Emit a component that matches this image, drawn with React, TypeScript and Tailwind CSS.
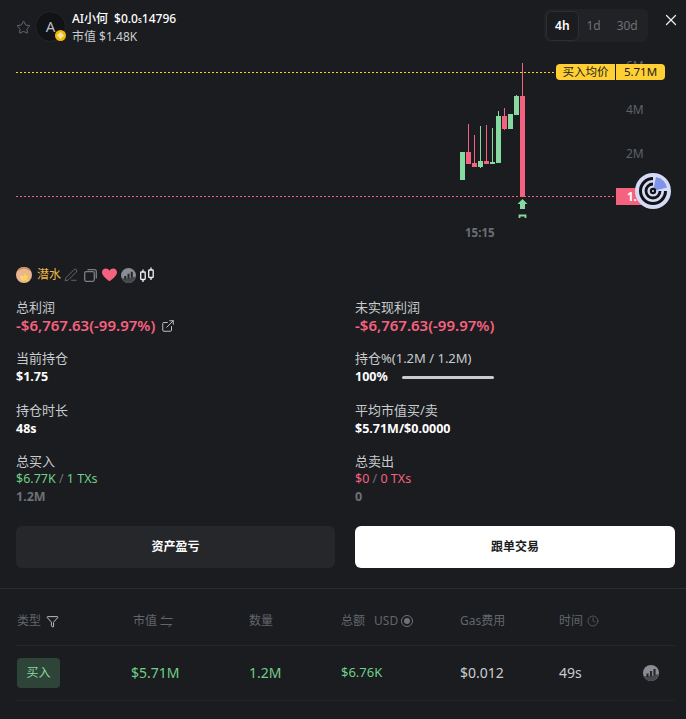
import React from 'react';
import { Clock, Filter, ExternalLink, PenLine, Star, X } from 'lucide-react';

interface Candle {
  x: number;
  top: number;
  bottom: number;
  wickTop: number;
  wickBottom: number;
  up: boolean;
}

const GREEN = '#86d9a0';
const RED = '#f4627f';

// y values are page coordinates, the svg is shifted by the chart's top
const candles: Candle[] = [
  { x: 460, top: 152, bottom: 180, wickTop: 152, wickBottom: 180, up: true },
  { x: 466, top: 152, bottom: 164, wickTop: 124, wickBottom: 164, up: false },
  { x: 472, top: 163, bottom: 167, wickTop: 135, wickBottom: 167, up: false },
  { x: 478, top: 161, bottom: 167, wickTop: 126, wickBottom: 168, up: true },
  { x: 484, top: 161, bottom: 164, wickTop: 125, wickBottom: 164, up: false },
  { x: 490, top: 162, bottom: 164, wickTop: 128, wickBottom: 164, up: true },
  { x: 496, top: 116, bottom: 163, wickTop: 111, wickBottom: 163, up: true },
  { x: 502, top: 116, bottom: 129, wickTop: 108, wickBottom: 130, up: false },
  { x: 508, top: 114, bottom: 129, wickTop: 114, wickBottom: 129, up: true },
  { x: 514, top: 96, bottom: 115, wickTop: 95, wickBottom: 115, up: true },
  { x: 520, top: 96, bottom: 197, wickTop: 63, wickBottom: 197, up: false },
];

const CHART_TOP = 58;

const GmgnIcon = ({ size }: { size: number }) => (
  <svg width={size} height={size} viewBox="0 0 16 16">
    <circle cx="8" cy="8" r="8" fill="#8a8d93" />
    <path d="M0.500 11 Q8 12 15.500 9 Q14 15.500 8 16 Q2.500 15.500 0.500 11Z" fill="#45474c" />
    <path d="M4.500 12V8.500M8 11.500V6M11.500 10.500V4" stroke="#26282c" strokeWidth="2.200" />
  </svg>
);

const CandleIcon = () => (
  <svg width="14" height="16" viewBox="0 0 14 16" fill="none" stroke="#f2f3f4" strokeWidth="1.300">
    <rect x="0.700" y="5" width="4.500" height="7.500" rx="0.800" />
    <rect x="8.700" y="3" width="4.500" height="7.500" rx="0.800" />
    <path d="M3 2.500V5M3 12.500V15M11 0.500V3M11 10.500V13" />
  </svg>
);

const CopyIcon = () => (
  <svg width="13" height="13" viewBox="0 0 13 13" fill="none" stroke="#7b7e83" strokeWidth="1.300">
    <rect x="0.700" y="2.700" width="9.600" height="9.600" rx="1.500" />
    <path d="M3.500 0.700H10.500A1.800 1.800 0 0 1 12.300 2.500V9.500" />
  </svg>
);

const RadarBadge = () => (
  <svg width="36" height="36" viewBox="0 0 36 36">
    <circle cx="18" cy="18" r="18" fill="#d6dbf5" />
    <path d="M18 18 L21 4 A14.500 14.500 0 0 1 32 14.500Z" fill="#7f93e8" />
    <path d="M18 5.500 A12.500 12.500 0 1 0 30.500 18" fill="none" stroke="#111216" strokeWidth="3" />
    <path d="M18 11 A7 7 0 1 0 25 18" fill="none" stroke="#111216" strokeWidth="2.800" />
    <circle cx="18" cy="18" r="3.200" fill="#111216" />
    <circle cx="18" cy="18" r="1" fill="#d6dbf5" />
  </svg>
);

const EmojiAvatar = () => (
  <svg width="16" height="16" viewBox="0 0 16 16">
    <circle cx="8" cy="8" r="8" fill="#eab48c" />
    <path d="M2 4 Q8 -1 14 4 L14 2 Q8 -2 2 2Z" fill="#c98a5e" />
    <path d="M9 6 L10.200 9 L13 9.300 L11 11.300 L11.600 14.500 L9 13 L6.400 14.500 L7 11.300 L5 9.300 L7.800 9Z" fill="#ffd83d" />
    <path d="M5 7.500 L7.500 10 L6 14 L4 11Z" fill="#f5cf9f" />
  </svg>
);

const Chart = () => (
  <div className="relative h-[192px]">
    <svg className="absolute left-0 top-0" width="686" height="192" viewBox={`0 ${CHART_TOP} 686 192`}>
      <line x1="16" x2="556" y1="72.500" y2="72.500" stroke="#ffcf33" strokeDasharray="2 2" />
      <line x1="16" x2="616" y1="196.500" y2="196.500" stroke={RED} strokeDasharray="2 2" />
      {candles.map((c) => (
        <g key={c.x} fill={c.up ? GREEN : RED}>
          <rect x={c.x + 2} y={c.wickTop} width="1" height={c.wickBottom - c.wickTop} />
          <rect x={c.x} y={c.top} width="5" height={c.bottom - c.top} />
        </g>
      ))}
      <path d="M522.500 199 L527.500 204 H525 V209 H520 V204 H517.500Z" fill={GREEN} />
      <path d="M519.500 218 V215.500 H525.500 V218" fill="none" stroke={GREEN} strokeWidth="1.800" />
    </svg>

    <span className="absolute left-[626px] top-0 text-xs leading-4 text-[#5f6267]">6M</span>
    <span className="absolute left-[626px] top-[44px] text-xs leading-4 text-[#5f6267]">4M</span>
    <span className="absolute left-[626px] top-[88px] text-xs leading-4 text-[#5f6267]">2M</span>

    <div className="absolute left-[556px] top-[6px] flex h-4 items-stretch text-[11.5px] leading-4 text-[#1a1c20]">
      <span className="flex w-[59px] items-center justify-center rounded-l-sm bg-[#ffcf33]">买入均价</span>
      <span className="ml-px flex w-[49px] items-center justify-center rounded-r-sm bg-[#ffcf33]">5.71M</span>
    </div>

    <div className="absolute left-[616px] top-[130px] flex h-[17px] w-[36px] items-center bg-[#f4627f] pl-[11px] text-[11.5px] font-bold text-white">
      1.7
    </div>
    <div className="absolute left-[635px] top-[115px] rounded-full">
      <RadarBadge />
    </div>

    <span className="absolute left-[465px] top-[167px] text-[11.5px] font-bold leading-4 text-[#6b6e73]">15:15</span>
  </div>
);

const Stat = ({ label, children }: { label: React.ReactNode; children: React.ReactNode }) => (
  <div>
    <div className="text-[13px] leading-[17px] text-[#c9ccce]">{label}</div>
    {children}
  </div>
);

const HeaderCell = ({ children }: { children: React.ReactNode }) => (
  <div className="flex items-center text-xs text-[#63666b]">{children}</div>
);

export default function App() {
  return (
    <div
      className="h-[719px] w-[686px] overflow-hidden bg-[#1a1c20] text-white"
      style={{ fontFamily: '"Noto Sans", "Noto Sans CJK SC", sans-serif' }}
    >
      {/* Header */}
      <div className="flex h-[58px] items-start pl-4 pr-[6px] pt-[9px]">
        <Star size={15} strokeWidth={1.5} className="mt-[11px] text-[#6b6e73]" />
        <div className="relative ml-[4px] mt-[2px] flex h-[31px] w-[31px] items-center justify-center rounded-full border border-[#24262b] bg-[#121316] text-[15px] text-[#b9bcc0]">
          A
          <span className="absolute bottom-0 right-[-1px] flex h-[11px] w-[11px] items-center justify-center rounded-full bg-[#f0b90b]">
            <span className="h-[5px] w-[5px] rotate-45 bg-[#fde9a5]" />
          </span>
        </div>
        <div className="ml-[6px] mt-[1px]">
          <div className="flex h-[18px] items-center gap-[6px] text-xs font-medium leading-[18px]">
            <span>AI小何</span>
            <span>
              $0.0<span className="text-[8px]">s</span>14796
            </span>
          </div>
          <div className="text-xs leading-[17px] text-[#c9ccce]">市值 $1.48K</div>
        </div>
        <div className="ml-auto flex h-[33px] w-[104px] items-center rounded-md bg-[#202226] p-[2px] text-xs text-[#6e7176]">
          <span className="flex h-[30px] w-[33px] items-center justify-center rounded-md border border-[#2c2e33] bg-[#1a1c20] font-semibold text-white">
            4h
          </span>
          <span className="flex w-[30px] justify-center">1d</span>
          <span className="flex w-[38px] justify-center">30d</span>
        </div>
        <X size={18} strokeWidth={1.6} className="ml-[14px] mt-[2px] text-[#eceded]" />
      </div>

      <Chart />

      {/* Tag row */}
      <div className="ml-4 mt-[15px] flex h-5 items-center">
        <EmojiAvatar />
        <span className="ml-[5px] text-xs text-[#e9b949]">潜水</span>
        <PenLine size={14} strokeWidth={1.5} className="ml-[3px] text-[#6e7176]" />
        <span className="ml-[6px] flex"><CopyIcon /></span>
        <svg width="15" height="14" viewBox="0 0 24 22" className="ml-[5px]" fill="#f4627f">
          <path d="M12 21 C4 15 0 11 0 6.500 C0 3 2.800 0.500 6 0.500 C8.500 0.500 10.800 1.800 12 4 C13.200 1.800 15.500 0.500 18 0.500 C21.200 0.500 24 3 24 6.500 C24 11 20 15 12 21Z" />
        </svg>
        <span className="ml-[4px] flex"><GmgnIcon size={15} /></span>
        <span className="ml-[4px] flex"><CandleIcon /></span>
      </div>

      {/* Stats */}
      <div className="mt-[14px] grid grid-cols-[339px_1fr] gap-y-[15px] pl-4 pr-[11px]">
        <Stat label="总利润">
          <div className="flex items-center text-[15px] font-semibold leading-[19px] text-[#f4627f]">
            -$6,767.63(-99.97%)
            <ExternalLink size={14} strokeWidth={1.6} className="ml-[6px] text-[#c9ccce]" />
          </div>
        </Stat>
        <Stat label="未实现利润">
          <div className="text-[15px] font-semibold leading-[19px] text-[#f4627f]">-$6,767.63(-99.97%)</div>
        </Stat>
        <Stat label="当前持仓">
          <div className="text-[12.5px] font-bold leading-5">$1.75</div>
        </Stat>
        <Stat label="持仓%(1.2M / 1.2M)">
          <div className="flex items-center text-[12.5px] font-bold leading-5">
            <span className="w-[47px]">100%</span>
            <span className="h-[3px] w-[92px] rounded-full bg-[#c9ccce]" />
          </div>
        </Stat>
        <Stat label="持仓时长">
          <div className="text-[12.5px] font-bold leading-[19px]">48s</div>
        </Stat>
        <Stat label="平均市值买/卖">
          <div className="text-[12.5px] font-bold leading-[19px]">$5.71M/$0.0000</div>
        </Stat>
        <Stat label="总买入">
          <div className="text-[12.5px] leading-[18px] text-[#6fcf87]">
            $6.77K <span className="text-[#6e7176]">/</span> 1 TXs
          </div>
          <div className="text-[12.5px] font-bold leading-[18px] text-[#6e7176]">1.2M</div>
        </Stat>
        <Stat label="总卖出">
          <div className="text-[12.5px] leading-[18px] text-[#f4627f]">
            $0 <span className="text-[#6e7176]">/</span> 0 TXs
          </div>
          <div className="text-[12.5px] font-bold leading-[18px] text-[#6e7176]">0</div>
        </Stat>
      </div>

      {/* Buttons */}
      <div className="mt-5 flex gap-5 px-4 pr-[11px]">
        <button className="flex h-[42px] w-[319px] items-center justify-center rounded-md bg-[#25272b] text-xs font-semibold text-white">
          资产盈亏
        </button>
        <button className="flex h-[42px] w-[320px] items-center justify-center rounded-md bg-white text-xs font-semibold text-[#1a1c20]">
          跟单交易
        </button>
      </div>

      <div className="mt-5 h-px bg-[#2a2c30]" />

      {/* Trades table */}
      <div className="mx-4 mr-[11px]">
        <div className="grid h-[57px] grid-cols-[116px_116px_92px_119px_99px_1fr] items-center border-b border-[#25272b] pl-px pt-[8px]">
          <HeaderCell>
            类型
            <Filter size={13} strokeWidth={1.5} className="ml-[5px] text-[#e2e3e4]" />
          </HeaderCell>
          <HeaderCell>
            市值<span className="ml-[3px] text-[13px] leading-none">⇋</span>
          </HeaderCell>
          <HeaderCell>数量</HeaderCell>
          <HeaderCell>
            总额<span className="ml-[9px]">USD</span>
            <span className="ml-[3px] flex h-[12px] w-[12px] items-center justify-center rounded-full border border-[#6e7176]">
              <span className="h-[6px] w-[6px] rounded-full bg-[#6e7176]" />
            </span>
          </HeaderCell>
          <HeaderCell>Gas费用</HeaderCell>
          <HeaderCell>
            时间
            <Clock size={12} strokeWidth={1.5} className="ml-[4px]" />
          </HeaderCell>
        </div>
        <div className="grid h-[55px] grid-cols-[116px_116px_92px_119px_99px_1fr] items-center border-b border-[#222428] pl-px">
          <div>
            <span className="flex h-[30px] w-[43px] items-center justify-center rounded-[4px] bg-[#2f4438] text-xs text-[#86d9a0]">买入</span>
          </div>
          <div className="ml-[-2px] text-sm text-[#6fcf87]">$5.71M</div>
          <div className="text-sm text-[#6fcf87]">1.2M</div>
          <div className="text-[13px] text-[#6fcf87]">$6.76K</div>
          <div className="text-sm text-[#c9ccce]">$0.012</div>
          <div className="flex items-center justify-between pr-[16px] text-sm text-[#c9ccce]">
            49s
            <GmgnIcon size={16} />
          </div>
        </div>
      </div>
    </div>
  );
}
